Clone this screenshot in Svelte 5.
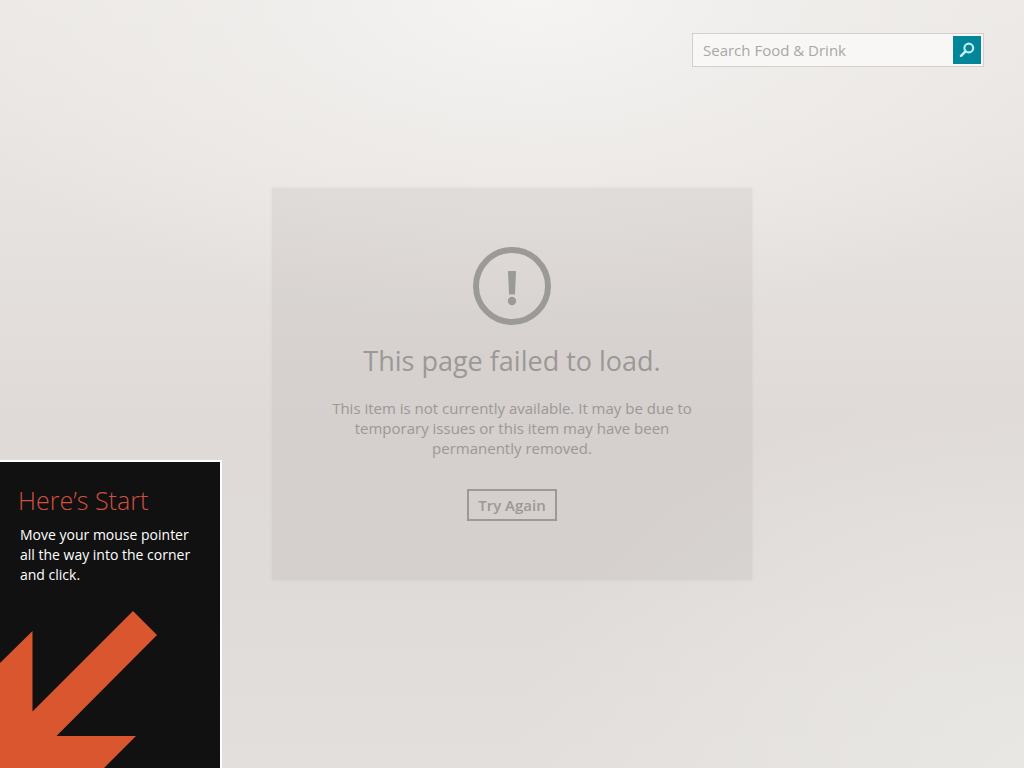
<script>
  let query = $state('');
</script>

<div class="page">
  <form class="search" role="search" onsubmit={(e) => e.preventDefault()}>
    <input type="text" aria-label="Search Food & Drink" placeholder="Search Food & Drink" bind:value={query} />
    <button type="submit" aria-label="Search">
      <svg viewBox="0 0 28 28" aria-hidden="true">
        <circle cx="15.8" cy="12" r="4.4" fill="none" stroke="#c9edf5" stroke-width="2.1" />
        <path d="M12.5 15.3 L8 19.8" stroke="#c9edf5" stroke-width="2.6" stroke-linecap="round" />
      </svg>
    </button>
  </form>

  <main class="error">
    <svg class="alert" viewBox="0 0 78 78" aria-hidden="true">
      <circle cx="39" cy="39" r="36" fill="none" stroke="#9b9a99" stroke-width="6" />
      <path d="M35 24 H43 L42 47.500 H36 Z" fill="#9b9a99" />
      <circle cx="39" cy="54" r="4.2" fill="#9b9a99" />
    </svg>
    <h1>This page failed to load.</h1>
    <p>This item is not currently available. It may be due to temporary issues or this item may have been permanently removed.</p>
    <button type="button">Try Again</button>
  </main>

  <aside class="tip">
    <h2>Here’s Start</h2>
    <p>Move your mouse pointer all the way into the corner and click.</p>
    <svg viewBox="0 0 220 168" aria-hidden="true">
      <path d="M133 11 L157 35 L56.5 136 H136 L104 168 H0 V63 L32.5 31 V111.500 Z" fill="#d9562e" />
    </svg>
  </aside>
</div>

<style>
  :global(body) {
    margin: 0;
  }

  .page {
    display: grid;
    grid-template: minmax(100vh, auto) / minmax(0, 1fr);
    font-family: 'Open Sans', 'Noto Sans', sans-serif;
    background:
      radial-gradient(ellipse 62% 42% at 52% 0%, #f5f4f3 0%, rgba(241, 239, 237, 0.7) 45%, rgba(236, 232, 229, 0) 100%),
      radial-gradient(ellipse 50% 50% at 100% 100%, #e9e7e4 0%, rgba(232, 229, 226, 0) 100%),
      linear-gradient(to bottom, #ebe8e5 0%, #e7e3e0 25%, #dfdad7 55%, #dfdbd8 75%, #e2dfdc 100%);
  }

  .page > * {
    grid-area: 1 / 1;
  }

  .search {
    place-self: start end;
    display: flex;
    box-sizing: border-box;
    width: 292px;
    max-width: 100%;
    margin: 33px 40px 0 0;
    padding: 2px;
    border: 1px solid #d3cfcd;
    background: #f8f7f5;
  }

  .search input {
    flex: 1;
    min-width: 0;
    padding: 0 8px;
    border: 0;
    background: none;
    color: #555;
    font: 15px/28px 'Open Sans', 'Noto Sans', sans-serif;
  }

  .search input::placeholder {
    color: #a9a7a5;
    opacity: 1;
  }

  .search button {
    width: 28px;
    height: 28px;
    padding: 0;
    border: 0;
    background: #038699;
  }

  .search svg {
    display: block;
  }

  .error {
    place-self: center;
    display: flex;
    flex-direction: column;
    align-items: center;
    box-sizing: border-box;
    width: 480px;
    max-width: 100%;
    padding: 59px 52px;
    background: rgba(150, 142, 138, 0.13);
    box-shadow: 0 0 3px rgba(130, 122, 118, 0.12);
    color: #9b9896;
    text-align: center;
  }

  .alert {
    width: 78px;
    height: 78px;
  }

  .error h1 {
    margin: 18px 0 0;
    font-size: 27px;
    line-height: 36px;
    font-weight: 400;
  }

  .error p {
    margin: 19px 0 0;
    font-size: 15px;
    line-height: 20px;
  }

  .error button {
    height: 32px;
    margin-top: 31px;
    padding: 0 9px;
    border: 2px solid #9b9896;
    background: none;
    color: #9b9896;
    font: 600 15px/28px 'Open Sans', 'Noto Sans', sans-serif;
  }

  .tip {
    place-self: end start;
    width: 220px;
    border: solid #fff;
    border-width: 2px 2px 0 0;
    background: #111;
    color: #fff;
  }

  .tip h2 {
    margin: 20px 18px 0;
    color: #d2503f;
    font-size: 25px;
    line-height: 36px;
    font-weight: 300;
  }

  .tip p {
    margin: 7px 20px 15px;
    font-size: 14px;
    line-height: 20px;
  }

  .tip svg {
    display: block;
    width: 100%;
  }
</style>
